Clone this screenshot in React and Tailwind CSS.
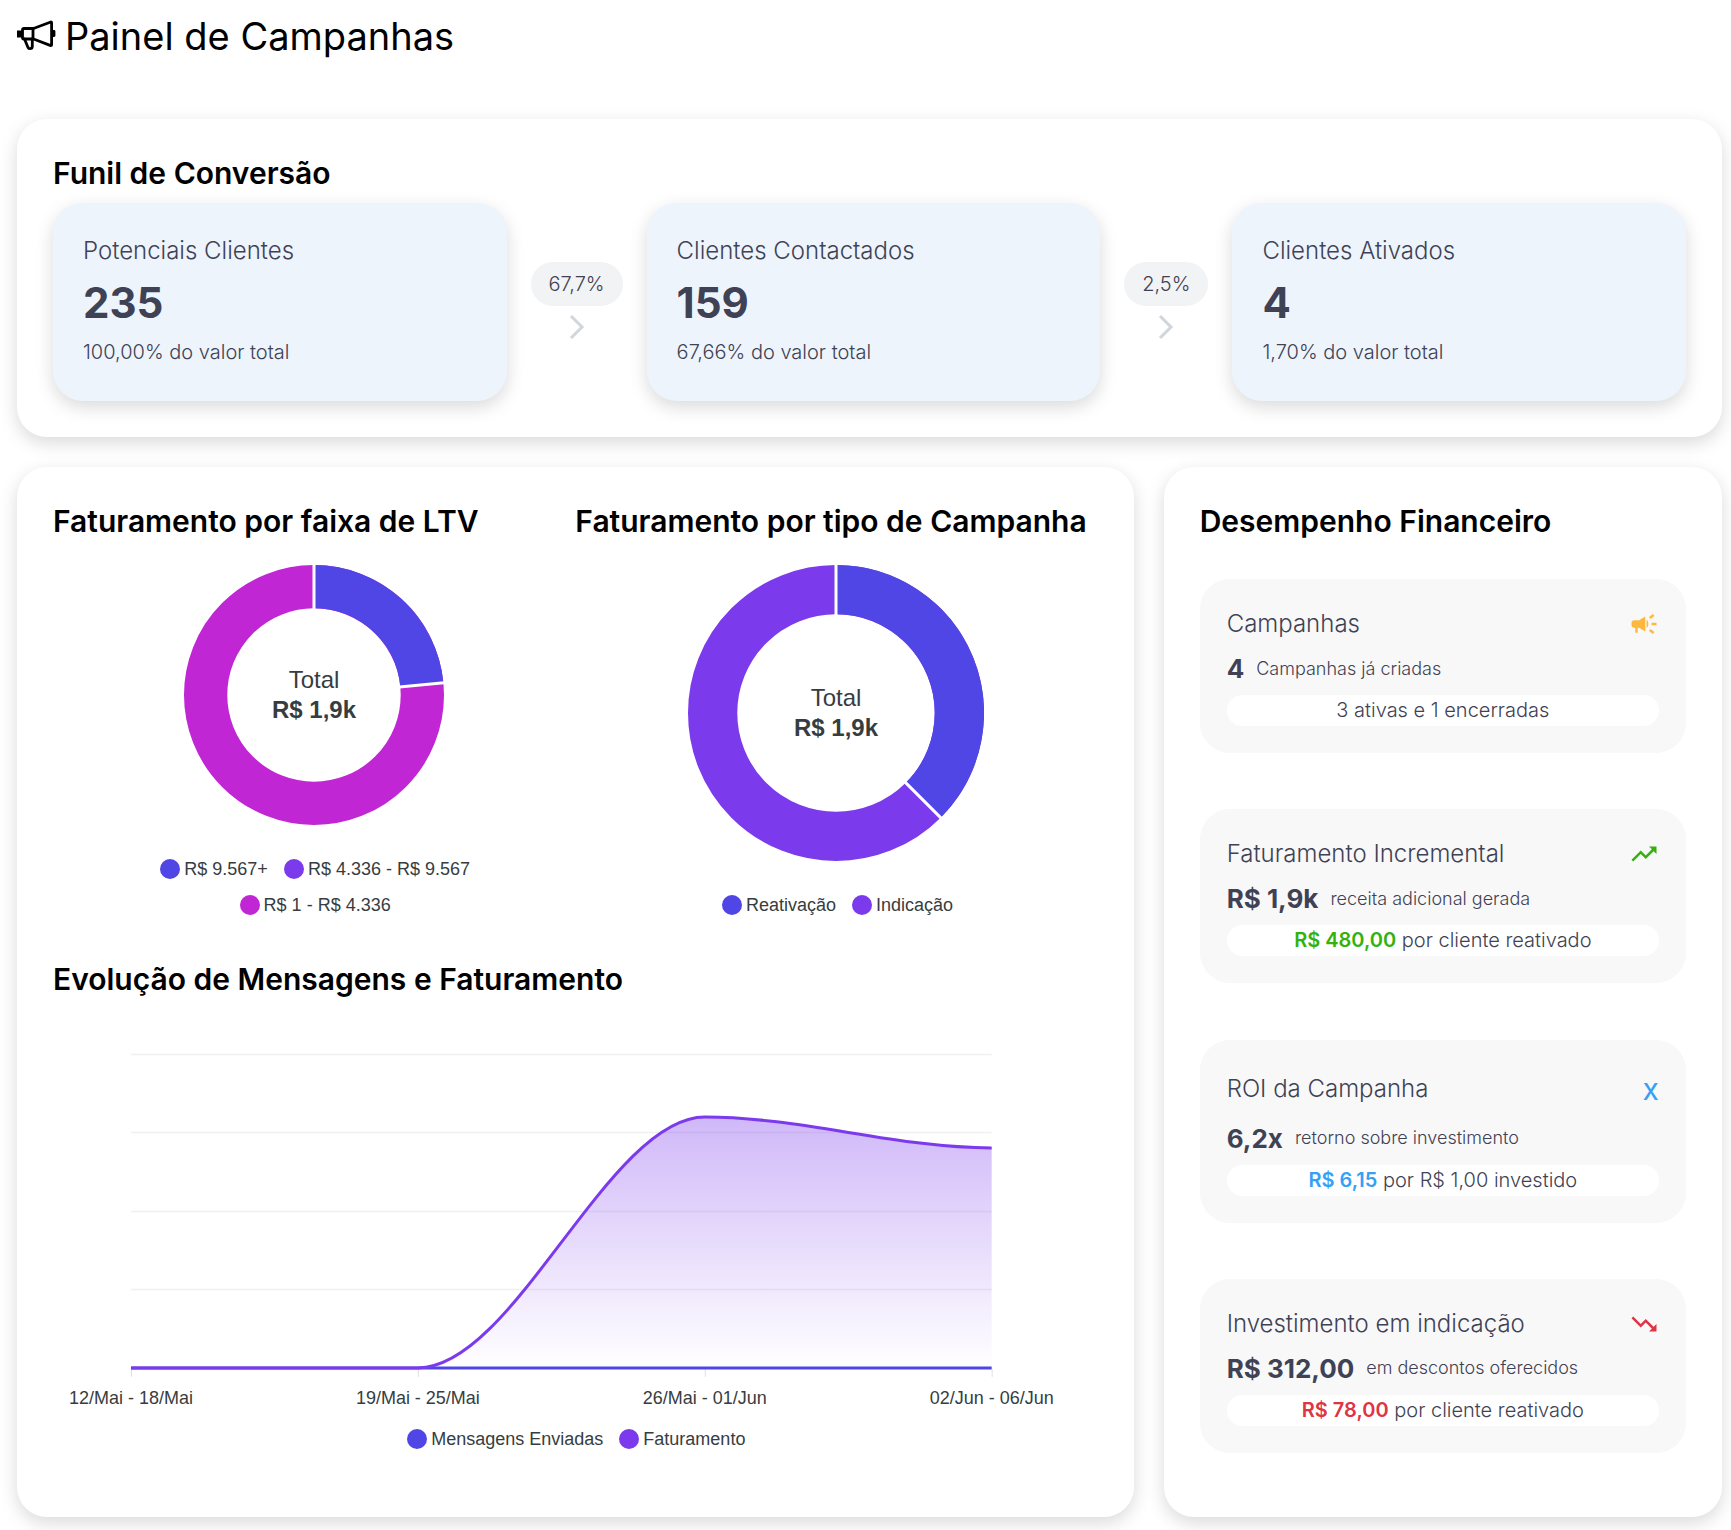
import React from "react";
import { MdCampaign, MdTrendingUp, MdTrendingDown } from "react-icons/md";

const CARD =
  "rounded-[30px] bg-white p-9 shadow-[0_6px_18px_rgba(0,0,0,0.15)]";

const funnel = [
  { label: "Potenciais Clientes", value: "235", note: "100,00% do valor total", next: "67,7%" },
  { label: "Clientes Contactados", value: "159", note: "67,66% do valor total", next: "2,5%" },
  { label: "Clientes Ativados", value: "4", note: "1,70% do valor total" },
];

const ltvLegend = [
  { label: "R$ 9.567+", color: "#4f46e5" },
  { label: "R$ 4.336 - R$ 9.567", color: "#7c3aed" },
  { label: "R$ 1 - R$ 4.336", color: "#c026d3" },
];

const typeLegend = [
  { label: "Reativação", color: "#4f46e5" },
  { label: "Indicação", color: "#7c3aed" },
];

const evolutionLegend = [
  { label: "Mensagens Enviadas", color: "#4f46e5" },
  { label: "Faturamento", color: "#7c3aed" },
];

const weeks = [
  { x: 78, label: "12/Mai - 18/Mai" },
  { x: 365, label: "19/Mai - 25/Mai" },
  { x: 652, label: "26/Mai - 01/Jun" },
  { x: 939, label: "02/Jun - 06/Jun" },
];

const CURVE = "M78 359H365C461 359 556 108 652 108C748 108 843 139 939 139";

function CardTitle({ children }) {
  return <h2 className="mb-3 text-3xl leading-9 font-semibold text-black">{children}</h2>;
}

function Megaphone() {
  return (
    <svg viewBox="0 0 40 40" className="size-10" fill="none" stroke="currentColor" strokeWidth="2.8" strokeLinejoin="round" strokeLinecap="round" aria-hidden="true">
      <path d="M0 14.500h5v7H0z" fill="currentColor" stroke="none" />
      <path d="M35.500 15.500h1.500v4h-1.500z" fill="currentColor" />
      <path d="M7 12.500h9.500L33.800 6q.8 0 .8.800v22q0 .8-.8.800L16.500 23H7a1.500 1.500 0 0 1-1.500-1.500V14A1.500 1.500 0 0 1 7 12.500z" />
      <path d="M16 12.500v10" />
      <path d="M7.500 23l3.500 8.500q.7 1.200 2 1.200 2.300 0 2.300-2.200V23" />
    </svg>
  );
}

function Legend({ items }) {
  return (
    <ul className="flex flex-wrap justify-center gap-x-4 pl-0.5 font-['Liberation_Sans',Arial,sans-serif] text-lg leading-9 text-[#373d3f]">
      {items.map((item) => (
        <li key={item.label} className="flex items-center gap-1">
          <span className="size-5 rounded-full" style={{ backgroundColor: item.color }} />
          {item.label}
        </li>
      ))}
    </ul>
  );
}

function polar(radius, share) {
  const angle = share * 2 * Math.PI;
  return [150 + radius * Math.sin(angle), 150 - radius * Math.cos(angle)];
}

function Donut({ radius, share, first, second, label }) {
  const inner = radius * 0.667;
  const band = radius - inner;
  const mid = inner + band / 2;
  const [endX, endY] = polar(mid, share);
  const [inX, inY] = polar(inner - 1, share);
  const [outX, outY] = polar(radius + 1, share);
  const box = `${150 - radius} ${150 - radius} ${radius * 2} ${radius * 2}`;
  return (
    <svg viewBox={box} width={radius * 2} height={radius * 2} role="img" aria-label={label} className="mx-auto">
      <circle cx="150" cy="150" r={mid} fill="none" stroke={second} strokeWidth={band} />
      <path d={`M150 ${150 - mid}A${mid} ${mid} 0 0 1 ${endX} ${endY}`} fill="none" stroke={first} strokeWidth={band} />
      <path d={`M150 ${149 - radius}V${151 - inner}M${inX} ${inY}L${outX} ${outY}`} stroke="#fff" strokeWidth="3" />
      <g textAnchor="middle" fill="#373d3f" fontSize="24" className="font-['Liberation_Sans',Arial,sans-serif]">
        <text x="150" y="143">Total</text>
        <text x="150" y="173" fontWeight="700">R$ 1,9k</text>
      </g>
    </svg>
  );
}

function EvolutionChart() {
  return (
    <svg viewBox="0 0 1045 412" className="w-full" role="img" aria-label="Evolução de Mensagens e Faturamento">
      <defs>
        <linearGradient id="revenue" x1="0" y1="108" x2="0" y2="359" gradientUnits="userSpaceOnUse">
          <stop offset="0" stopColor="#7c3aed" stopOpacity="0.36" />
          <stop offset="1" stopColor="#7c3aed" stopOpacity="0" />
        </linearGradient>
      </defs>
      {[45, 123, 202, 280].map((y) => (
        <path key={y} d={`M78 ${y}.500H939`} stroke="#f0f0f0" strokeWidth="1.500" />
      ))}
      {weeks.map((week) => (
        <path key={week.x} d={`M${week.x}.500 360V368`} stroke="#e0e0e0" />
      ))}
      <path d={`${CURVE}V359H365Z`} fill="url(#revenue)" />
      <path d="M78 359H939" stroke="#4f46e5" strokeWidth="3" />
      <path d={CURVE} fill="none" stroke="#7c3aed" strokeWidth="3" />
      <g textAnchor="middle" fontSize="18" fill="#373d3f" className="font-['Liberation_Sans',Arial,sans-serif]">
        {weeks.map((week) => (
          <text key={week.x} x={week.x} y="395">{week.label}</text>
        ))}
      </g>
    </svg>
  );
}

function Metric({ title, icon, value, note, strong, strongColor, rest, tall }) {
  return (
    <section className="rounded-[30px] bg-[#f8f8f8] p-[27px]">
      <div className={`flex items-center justify-between ${tall ? "h-[45px]" : "h-9"}`}>
        <h3 className="text-2xl font-light">{title}</h3>
        {icon}
      </div>
      <div className="mt-1.5 flex h-[41px] items-center gap-3">
        <strong className="text-[26px] font-bold">{value}</strong>
        <span className="text-lg font-light">{note}</span>
      </div>
      <p className="mt-1.5 rounded-full bg-white text-center text-xl leading-[31px] font-light">
        {strong && <span className="font-semibold" style={{ color: strongColor }}>{strong}</span>}
        {strong && " "}
        {rest}
      </p>
    </section>
  );
}

export default function App() {
  return (
    <main className="bg-white pt-1.5 pr-[9px] pb-[13px] pl-[17px] font-[Inter,'Open_Sans',sans-serif] text-[#3f4254]">
      <header className="mb-[53px] flex h-[60px] items-center gap-2 text-black">
        <Megaphone />
        <h1 className="text-[38px] leading-[60px] font-normal">Painel de Campanhas</h1>
      </header>

      <section className={CARD}>
        <CardTitle>Funil de Conversão</CardTitle>
        <div className="flex items-center gap-6">
          {funnel.map((step) => (
            <React.Fragment key={step.label}>
              <article className="flex-1 rounded-[30px] bg-[#edf4fc] p-[30px] shadow-[0_6px_18px_rgba(0,0,0,0.15)]">
                <h3 className="text-2xl leading-9 font-light">{step.label}</h3>
                <p className="text-[42px] leading-[68px] font-bold">{step.value}</p>
                <p className="mb-1 text-xl leading-[30px] font-light">{step.note}</p>
              </article>
              {step.next && (
                <div className="flex flex-col items-center gap-1.5">
                  <span className="rounded-full bg-[#f2f3f5] px-[18px] text-xl leading-[44px] font-light">{step.next}</span>
                  <svg viewBox="0 0 30 30" className="size-[30px] text-gray-300" fill="none" stroke="currentColor" strokeWidth="3" aria-hidden="true">
                    <path d="M9 4l11 11L9 26" />
                  </svg>
                </div>
              )}
            </React.Fragment>
          ))}
        </div>
      </section>

      <div className="mt-[30px] grid grid-cols-[2fr_1fr] gap-[30px]">
        <div className={CARD}>
          <div className="grid grid-cols-2">
            <section className="flex min-h-[420px] flex-col">
              <CardTitle>Faturamento por faixa de LTV</CardTitle>
              <div className="pt-3.5">
                <Donut radius={130} share={0.235} first="#4f46e5" second="#c026d3" label="Faturamento por faixa de LTV" />
              </div>
              <div className="mx-auto mt-auto max-w-[360px]">
                <Legend items={ltvLegend} />
              </div>
            </section>
            <section className="flex min-h-[420px] flex-col">
              <CardTitle>Faturamento por tipo de Campanha</CardTitle>
              <div className="pt-3.5">
                <Donut radius={148} share={0.375} first="#4f46e5" second="#7c3aed" label="Faturamento por tipo de Campanha" />
              </div>
              <div className="mt-auto">
                <Legend items={typeLegend} />
              </div>
            </section>
          </div>
          <section className="mt-[38px] pb-6">
            <CardTitle>Evolução de Mensagens e Faturamento</CardTitle>
            <EvolutionChart />
            <Legend items={evolutionLegend} />
          </section>
        </div>

        <div className={`${CARD} flex flex-col`}>
          <CardTitle>Desempenho Financeiro</CardTitle>
          <div className="flex flex-1 flex-col justify-around">
            <Metric title="Campanhas" icon={<MdCampaign className="size-[30px] text-[#ffb83f]" />} value="4" note="Campanhas já criadas" rest="3 ativas e 1 encerradas" />
            <Metric title="Faturamento Incremental" icon={<MdTrendingUp className="size-[30px] text-[#34b20c]" />} value="R$ 1,9k" note="receita adicional gerada" strong="R$ 480,00" strongColor="#34b20c" rest="por cliente reativado" />
            <Metric tall title="ROI da Campanha" icon={<span className="text-[30px] text-[#36a0f4]">x</span>} value="6,2x" note="retorno sobre investimento" strong="R$ 6,15" strongColor="#36a0f4" rest="por R$ 1,00 investido" />
            <Metric title="Investimento em indicação" icon={<MdTrendingDown className="size-[30px] text-[#dc3545]" />} value="R$ 312,00" note="em descontos oferecidos" strong="R$ 78,00" strongColor="#e03343" rest="por cliente reativado" />
          </div>
        </div>
      </div>
    </main>
  );
}
